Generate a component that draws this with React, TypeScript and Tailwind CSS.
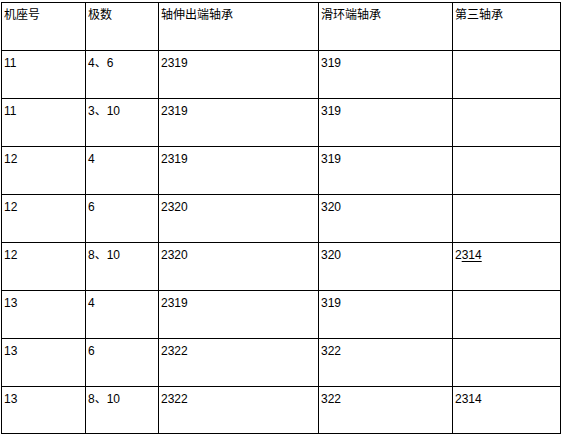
import React from "react";

const rows: [string, string, string, string, React.ReactNode][] = [
  ["11", "4、6", "2319", "319", ""],
  ["11", "3、10", "2319", "319", ""],
  ["12", "4", "2319", "319", ""],
  ["12", "6", "2320", "320", ""],
  ["12", "8、10", "2320", "320", <span>2<span className="underline underline-offset-2">314</span></span>],
  ["13", "4", "2319", "319", ""],
  ["13", "6", "2322", "322", ""],
  ["13", "8、10", "2322", "322", "2314"],
];

const widths = ["w-[84px]", "w-[73px]", "w-[160px]", "w-[134px]", "w-[108px]"];
const cell = "border border-black align-top pl-[2px] pt-[5px] leading-[14px]";

export default function App() {
  return (
    <div
      className="bg-white w-[562px] h-[435px] pt-[2px] pl-[1px] text-[12px] text-black"
      style={{ fontFamily: '"Liberation Sans", "Noto Sans CJK SC", sans-serif' }}
    >
      <table className="border-collapse table-fixed w-[560px]">
        <colgroup>
          {widths.map((w, i) => (
            <col key={i} className={w} />
          ))}
        </colgroup>
        <tbody>
          <tr className="h-[48px]">
            <td className={cell}>机座号</td>
            <td className={cell}>极数</td>
            <td className={cell}>轴伸出端轴承</td>
            <td className={cell}>滑环端轴承</td>
            <td className={cell}>第三轴承</td>
          </tr>
          {rows.map((r, i) => (
            <tr key={i} className={i === 7 ? "h-[47px]" : "h-[48px]"}>
              {r.map((c, j) => (
                <td key={j} className={cell}>
                  {c}
                </td>
              ))}
            </tr>
          ))}
        </tbody>
      </table>
    </div>
  );
}
